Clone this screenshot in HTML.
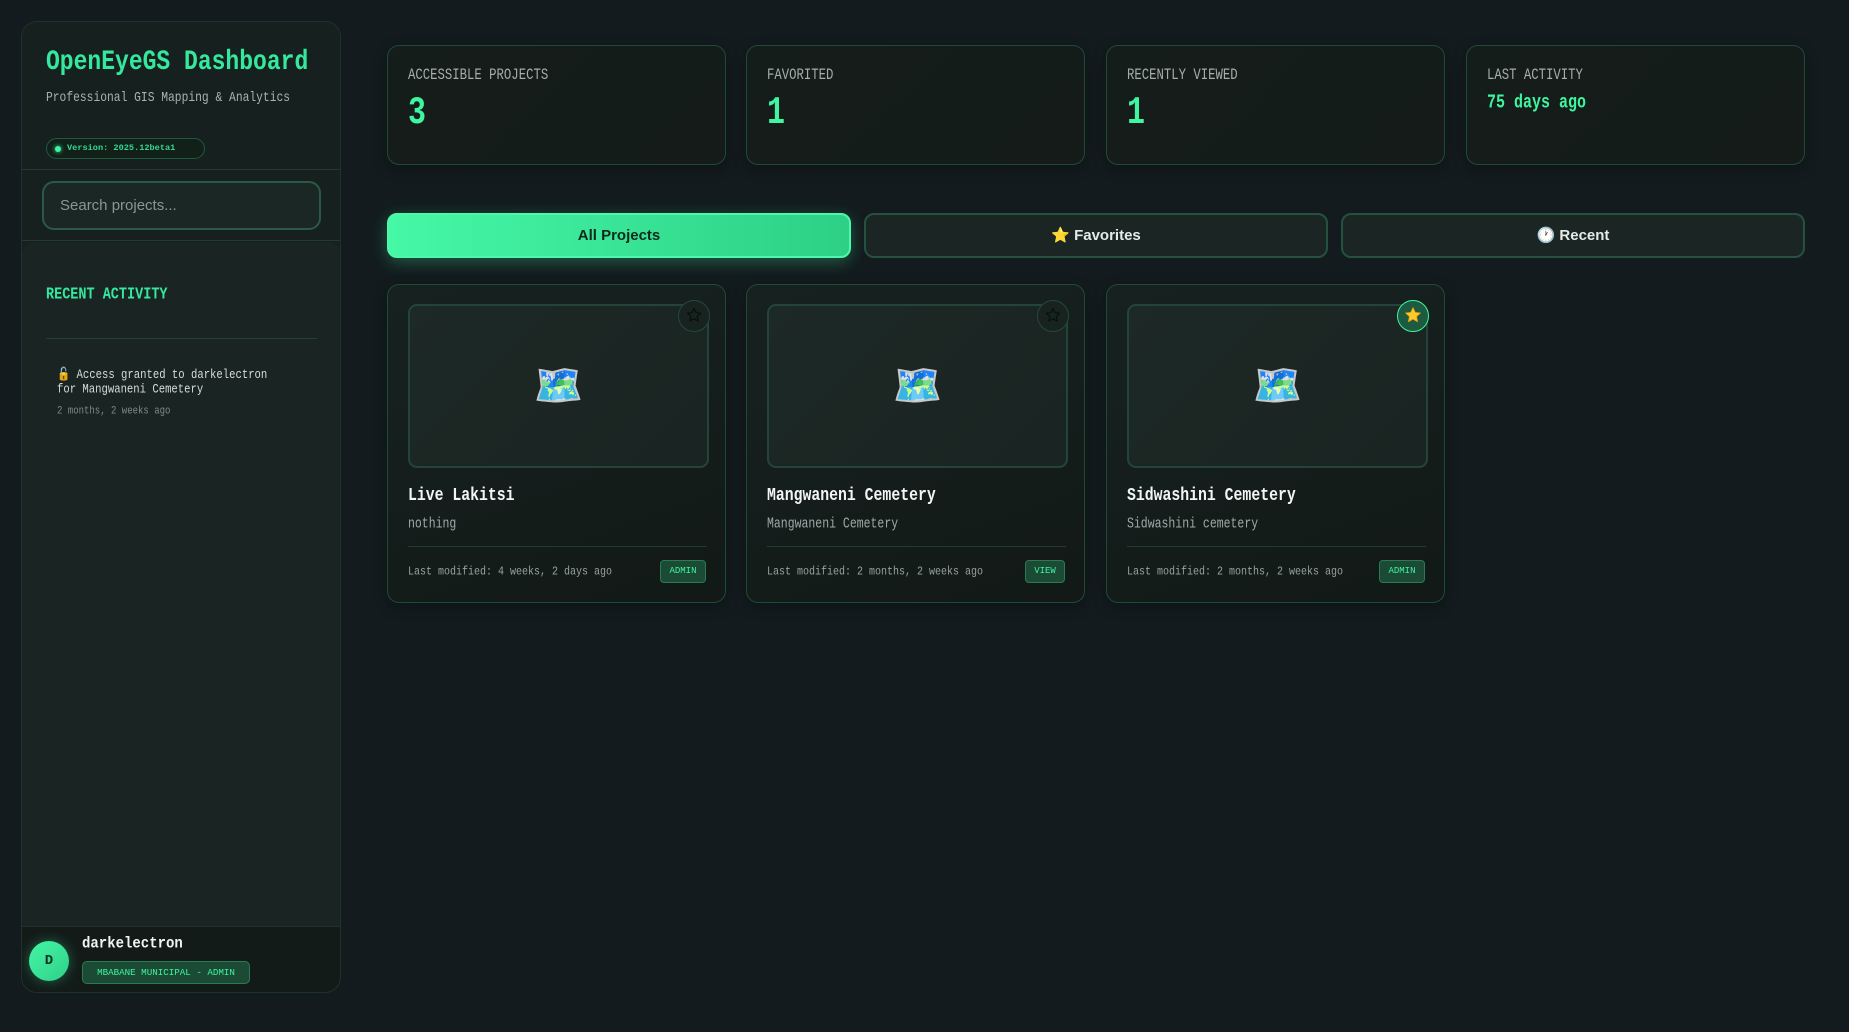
<!DOCTYPE html>
<html><head><meta charset="utf-8"><style>
*{box-sizing:border-box;margin:0;padding:0}
body{width:1849px;height:1032px;background:#131b1e;font-family:"Liberation Mono",monospace;color:#e6ece9;position:relative;overflow:hidden}
.abs{position:absolute}
.side{left:21px;top:21px;width:320px;height:972px;background:#16201e;border:1px solid #1d3329;border-radius:16px;overflow:hidden}
.title{left:24px;top:24px;font-size:23px;font-weight:bold;color:#34e89e;white-space:nowrap;transform:scaleY(1.2);transform-origin:left top}
.sub{left:24px;top:69px;font-size:11.3px;color:#a9b3ae;white-space:nowrap;transform:scaleY(1.25);transform-origin:left top}
.pill{left:24px;top:116px;width:159px;height:21px;border:1px solid #1f5a3e;border-radius:11px;background:#12201a;font-size:8.6px;color:#35d890;font-weight:bold;padding-left:20px;line-height:19px;white-space:nowrap}
.pill:before{content:"";position:absolute;left:8px;top:7px;width:6px;height:6px;border-radius:50%;background:#3ef5a0;box-shadow:0 0 4px #3ef5a0}
.hr{left:0;width:320px;height:1px;background:#223a30}
.search{left:20px;top:159px;width:279px;height:49px;border:2px solid #2a5a44;border-radius:12px;background:#1b2725;font-family:"Liberation Sans",sans-serif;font-size:15px;color:#8a9690;padding:14px 0 0 16px}
.panel{left:0;top:220px;width:320px;height:684px;background:#1a2523;border-radius:14px 14px 0 0}
.ra{left:24px;top:44px;font-size:13.5px;font-weight:bold;color:#34e89e;transform:scaleY(1.25);transform-origin:left top}
.act{left:35px;font-size:10.6px;color:#d5dcd8;white-space:nowrap;transform:scaleY(1.2);transform-origin:left top}
.foot{left:0;top:904px;width:320px;height:68px;background:#131b19;border-top:1px solid #1e3329}
.av{left:7px;top:14px;width:40px;height:40px;border-radius:50%;background:linear-gradient(135deg,#45f5a5,#2fd08a);color:#103020;font-size:14px;font-weight:bold;text-align:center;line-height:40px;box-shadow:0 0 12px rgba(62,245,160,.35)}
.uname{left:60px;top:8px;font-size:14px;font-weight:bold;color:#f0f4f2;transform:scaleY(1.15);transform-origin:left top}
.ub{left:60px;top:34px;width:168px;height:23px;border:1px solid #2c7a55;border-radius:5px;background:#1b4a35;color:#3ef5a0;font-size:9.2px;text-align:center;line-height:21px;white-space:nowrap}
.stat{top:45px;width:339px;height:120px;border:1px solid #1f4a36;border-radius:12px;background:linear-gradient(135deg,#151d1a,#141b19);box-shadow:0 4px 14px rgba(0,0,0,.3)}
.sl{left:20px;top:20px;font-size:12.3px;color:#a5aea9;transform:scaleY(1.3);transform-origin:left top;white-space:nowrap}
.sn{left:20px;top:46px;font-size:30px;font-weight:bold;color:#3ef5a0;transform:scaleY(1.3);transform-origin:left top}
.tab{top:213px;width:464px;height:45px;border-radius:10px;border:2px solid #24523e;background:#1b2624;font-family:"Liberation Sans",sans-serif;font-weight:bold;font-size:15px;color:#e4ebe7;text-align:center;line-height:41px}
.tab.on{background:linear-gradient(90deg,#45f8a6,#2dd086);border-color:#4ef8aa;color:#0e2a1c;box-shadow:0 4px 16px rgba(62,245,160,.3)}
.card{top:284px;width:339px;height:319px;border:1px solid #1f4a36;border-radius:12px;background:linear-gradient(160deg,#172220,#121917);box-shadow:0 4px 14px rgba(0,0,0,.3)}
.th{left:20px;top:19px;width:301px;height:164px;border:2px solid #23443a;border-radius:9px;background:linear-gradient(135deg,#1d2926,#1a2422);text-align:center;line-height:160px;font-size:40px;font-family:"Noto Color Emoji","DejaVu Sans",sans-serif}
.star{left:290px;top:15px;width:32px;height:32px;border-radius:50%;border:1.5px solid #23483a;background:#182320}
.star svg{position:absolute;left:7px;top:6px}
.star.f{background:#1e5a40;border-color:#3ef5a0}
.ct{left:20px;top:201px;font-size:14.8px;font-weight:bold;color:#f2f5f3;white-space:nowrap;transform:scaleY(1.25);transform-origin:left top}
.cd{left:20px;top:231px;font-size:11.5px;color:#a0a9a4;white-space:nowrap;transform:scaleY(1.3);transform-origin:left top}
.cl{left:20px;top:261px;width:299px;height:1px;background:#1f3d31}
.cf{left:20px;top:281px;font-size:10px;color:#98a29d;white-space:nowrap;transform:scaleY(1.2);transform-origin:left top}
.bd{top:275px;height:23px;border:1px solid #2c7a55;border-radius:4px;background:#1b4a35;color:#3ef5a0;font-size:9px;text-align:center;line-height:21px}
</style></head><body>
<div class="abs side">
  <div class="abs title">OpenEyeGS Dashboard</div>
  <div class="abs sub">Professional GIS Mapping &amp; Analytics</div>
  <div class="abs pill">Version: 2025.12beta1</div>
  <div class="abs hr" style="top:147px"></div>
  <div class="abs search">Search projects...</div>
  <div class="abs hr" style="top:218px"></div>
  <div class="abs panel">
    <div class="abs ra">RECENT ACTIVITY</div>
    <div class="abs" style="left:24px;top:96px;width:271px;height:1px;background:#24403a"></div>
    <div class="abs act" style="top:124px">🔓  Access granted to darkelectron</div>
    <div class="abs act" style="top:141px">for Mangwaneni Cemetery</div>
    <div class="abs act" style="top:163px;font-size:9px;color:#7f8a85">2 months, 2 weeks ago</div>
  </div>
  <div class="abs foot">
    <div class="abs av">D</div>
    <div class="abs uname">darkelectron</div>
    <div class="abs ub">MBABANE MUNICIPAL - ADMIN</div>
  </div>
</div>

<div class="abs stat" style="left:387px"><div class="abs sl">ACCESSIBLE PROJECTS</div><div class="abs sn">3</div></div>
<div class="abs stat" style="left:746px"><div class="abs sl">FAVORITED</div><div class="abs sn">1</div></div>
<div class="abs stat" style="left:1106px"><div class="abs sl">RECENTLY VIEWED</div><div class="abs sn">1</div></div>
<div class="abs stat" style="left:1466px"><div class="abs sl">LAST ACTIVITY</div><div class="abs sn" style="font-size:15px;top:46px">75 days ago</div></div>

<div class="abs tab on" style="left:387px">All Projects</div>
<div class="abs tab" style="left:864px">⭐ Favorites</div>
<div class="abs tab" style="left:1341px">🕐 Recent</div>

<div class="abs card" style="left:387px">
  <div class="abs th">🗺️</div><div class="abs star"><svg width="16" height="16" viewBox="0 0 24 24"><path d="M12 2l3 6.5 7 .8-5.2 4.8 1.4 7L12 17.6 5.8 21l1.4-7L2 9.3l7-.8z" fill="none" stroke="#07100c" stroke-width="1.8" stroke-linejoin="round"/></svg></div>
  <div class="abs ct">Live Lakitsi</div><div class="abs cd">nothing</div><div class="abs cl"></div>
  <div class="abs cf">Last modified: 4 weeks, 2 days ago</div>
  <div class="abs bd" style="left:272px;width:46px">ADMIN</div>
</div>
<div class="abs card" style="left:746px">
  <div class="abs th">🗺️</div><div class="abs star"><svg width="16" height="16" viewBox="0 0 24 24"><path d="M12 2l3 6.5 7 .8-5.2 4.8 1.4 7L12 17.6 5.8 21l1.4-7L2 9.3l7-.8z" fill="none" stroke="#07100c" stroke-width="1.8" stroke-linejoin="round"/></svg></div>
  <div class="abs ct">Mangwaneni Cemetery</div><div class="abs cd">Mangwaneni Cemetery</div><div class="abs cl"></div>
  <div class="abs cf">Last modified: 2 months, 2 weeks ago</div>
  <div class="abs bd" style="left:278px;width:40px">VIEW</div>
</div>
<div class="abs card" style="left:1106px">
  <div class="abs th">🗺️</div><div class="abs star f"><svg width="18" height="18" viewBox="0 0 24 24" style="left:5.5px;top:5px"><path d="M12 2l3 6.5 7 .8-5.2 4.8 1.4 7L12 17.6 5.8 21l1.4-7L2 9.3l7-.8z" fill="#fcc92a" stroke="#e0a010" stroke-width="1" stroke-linejoin="round"/></svg></div>
  <div class="abs ct">Sidwashini Cemetery</div><div class="abs cd">Sidwashini cemetery</div><div class="abs cl"></div>
  <div class="abs cf">Last modified: 2 months, 2 weeks ago</div>
  <div class="abs bd" style="left:272px;width:46px">ADMIN</div>
</div>
</body></html>
